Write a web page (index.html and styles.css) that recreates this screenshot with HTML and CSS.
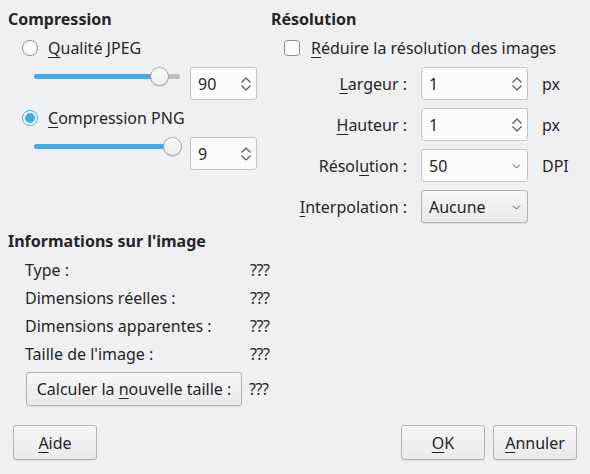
FILE: index.html
```html
<!DOCTYPE html>
<html lang="fr">
<head>
<meta charset="utf-8">
<title>Options d'image</title>
<link rel="stylesheet" href="styles.css">
</head>
<body>
<div class="dialog">
  <div class="top">
    <section class="col-left">
      <h2 class="heading">Compression</h2>
      <div class="radio-row">
        <span class="radio"></span>
        <span class="label"><u>Q</u>ualité JPEG</span>
      </div>
      <div class="slider-row">
        <div class="slider">
          <div class="track"></div>
          <div class="fill" style="width:126px"></div>
          <div class="handle" style="left:116px"></div>
        </div>
        <div class="spin">
          <span class="val">90</span>
          <svg class="arrows" width="12" height="18" viewBox="0 0 12 18"><path d="M1.5 7.5 L6 3 L10.5 7.5 M1.5 10.5 L6 15 L10.5 10.5" fill="none" stroke="#4d5054" stroke-width="1.1"/></svg>
        </div>
      </div>
      <div class="radio-row">
        <span class="radio checked"></span>
        <span class="label"><u>C</u>ompression PNG</span>
      </div>
      <div class="slider-row">
        <div class="slider">
          <div class="track"></div>
          <div class="fill" style="width:138px"></div>
          <div class="handle" style="left:129px"></div>
        </div>
        <div class="spin">
          <span class="val">9</span>
          <svg class="arrows" width="12" height="18" viewBox="0 0 12 18"><path d="M1.5 7.5 L6 3 L10.5 7.5 M1.5 10.5 L6 15 L10.5 10.5" fill="none" stroke="#4d5054" stroke-width="1.1"/></svg>
        </div>
      </div>
    </section>
    <section class="col-right">
      <h2 class="heading">Résolution</h2>
      <div class="check-row">
        <span class="checkbox"></span>
        <span class="label"><u>R</u>éduire la résolution des images</span>
      </div>
      <div class="form">
        <span class="flabel"><u>L</u>argeur :</span>
        <div class="spin wide">
          <span class="val">1</span>
          <svg class="arrows" width="12" height="18" viewBox="0 0 12 18"><path d="M1.5 7.5 L6 3 L10.5 7.5 M1.5 10.5 L6 15 L10.5 10.5" fill="none" stroke="#4d5054" stroke-width="1.1"/></svg>
        </div>
        <span class="unit">px</span>

        <span class="flabel"><u>H</u>auteur :</span>
        <div class="spin wide">
          <span class="val">1</span>
          <svg class="arrows" width="12" height="18" viewBox="0 0 12 18"><path d="M1.5 7.5 L6 3 L10.5 7.5 M1.5 10.5 L6 15 L10.5 10.5" fill="none" stroke="#4d5054" stroke-width="1.1"/></svg>
        </div>
        <span class="unit">px</span>

        <span class="flabel">Résol<u>u</u>tion :</span>
        <div class="combo edit">
          <span class="val">50</span>
          <svg class="chev" width="9" height="6" viewBox="0 0 9 6"><path d="M1 1.5 L4.5 5 L8 1.5" fill="none" stroke="#4d5054" stroke-width="1"/></svg>
        </div>
        <span class="unit">DPI</span>

        <span class="flabel"><u>I</u>nterpolation :</span>
        <div class="combo btn">
          <span class="val">Aucune</span>
          <svg class="chev" width="9" height="6" viewBox="0 0 9 6"><path d="M1 1.5 L4.5 5 L8 1.5" fill="none" stroke="#4d5054" stroke-width="1"/></svg>
        </div>
        <span class="unit"></span>
      </div>
    </section>
  </div>

  <section class="info">
    <h2 class="heading">Informations sur l'image</h2>
    <div class="info-grid">
      <span>Type :</span><span class="q">???</span>
      <span>Dimensions réelles :</span><span class="q">???</span>
      <span>Dimensions apparentes :</span><span class="q">???</span>
      <span>Taille de l'image :</span><span class="q">???</span>
    </div>
    <div class="calc-row">
      <button class="pbtn calc">Calculer la <u>n</u>ouvelle taille :</button>
      <span class="q">???</span>
    </div>
  </section>

  <div class="footer">
    <button class="pbtn dlg"><u>A</u>ide</button>
    <div class="spacer"></div>
    <button class="pbtn dlg"><u>O</u>K</button>
    <button class="pbtn dlg"><u>A</u>nnuler</button>
  </div>
</div>
</body>
</html>
```
FILE: styles.css
```css
html, body {
  margin: 0;
  padding: 0;
  background: #eff0f1;
}
body {
  font-family: "Noto Sans", "DejaVu Sans", sans-serif;
  font-size: 16px;
  color: #232629;
  line-height: 20px;
}
u {
  text-decoration: underline;
  text-decoration-thickness: 1px;
  text-underline-offset: 3px;
}
.dialog {
  width: 590px;
  height: 474px;
  box-sizing: border-box;
  padding: 9px 13px 14px 8px;
  display: flex;
  flex-direction: column;
}
.top {
  display: flex;
}
.heading {
  margin: 0;
  font-size: 16px;
  font-weight: bold;
  line-height: 20px;
}
.col-left {
  width: 263px;
}
.col-right {
  flex: 1;
}

/* radio */
.radio-row {
  display: flex;
  align-items: center;
  height: 20px;
  margin-top: 9px;
  padding-left: 14px;
}
.radio {
  width: 14px;
  height: 14px;
  border: 1px solid #8f9295;
  border-radius: 50%;
  background: #fcfcfc;
  margin-right: 10px;
  position: relative;
  flex: none;
}
.radio.checked {
  border-color: #3daee9;
  background: #fcfcfc;
}
.radio.checked::after {
  content: "";
  position: absolute;
  left: 2px;
  top: 2px;
  width: 10px;
  height: 10px;
  border-radius: 50%;
  background: #3daee9;
}

/* slider */
.slider-row {
  display: flex;
  align-items: flex-start;
  margin-top: 9px;
  padding-left: 26px;
}
.slider-row + .radio-row {
  margin-top: 8px;
}
.slider {
  position: relative;
  width: 148px;
  height: 19px;
  margin-right: 8px;
}
.track {
  position: absolute;
  left: 0;
  right: 2px;
  top: 7px;
  height: 5px;
  border-radius: 3px;
  background: #bcbec0;
}
.fill {
  position: absolute;
  left: 0;
  top: 7px;
  height: 5px;
  border-radius: 3px;
  background: #3daee9;
}
.handle {
  position: absolute;
  top: 0;
  width: 17px;
  height: 17px;
  border: 1px solid #a3a5a7;
  border-radius: 50%;
  background: linear-gradient(#fafbfb, #eceded);
  box-shadow: 0 1px 1px rgba(0,0,0,0.12);
}

/* spin box */
.spin, .combo {
  box-sizing: border-box;
  height: 33px;
  border: 1px solid #c1c3c5;
  border-radius: 3px;
  background: #fcfcfc;
  display: flex;
  align-items: center;
  padding-left: 7px;
  padding-right: 4px;
}
.spin {
  width: 67px;
}
.spin .val, .combo .val {
  flex: 1;
}
.arrows {
  display: block;
}
.spin.wide {
  width: 107px;
}

/* checkbox */
.check-row {
  display: flex;
  align-items: center;
  height: 20px;
  margin-top: 9px;
  padding-left: 13px;
}
.checkbox {
  box-sizing: border-box;
  width: 16px;
  height: 16px;
  border: 1px solid #8f9295;
  border-radius: 3px;
  background: #fcfcfc;
  margin-right: 11px;
  flex: none;
}

/* form grid */
.form {
  display: grid;
  grid-template-columns: 136px 107px auto;
  grid-auto-rows: 33px;
  column-gap: 14px;
  row-gap: 8px;
  margin-top: 9px;
  align-items: center;
}
.flabel {
  justify-self: end;
}
.combo {
  width: 107px;
  padding-right: 6px;
}
.chev {
  display: block;
}
.combo.btn {
  border-color: #b0b2b4;
  background: linear-gradient(#f5f6f6, #e9eaeb);
  box-shadow: 0 1px 1px rgba(0,0,0,0.08);
}

/* info */
.info {
  margin-top: 8px;
}
.info-grid {
  display: grid;
  grid-template-columns: 225px auto;
  grid-auto-rows: 28px;
  align-items: center;
  padding-left: 17px;
  margin-top: 5px;
}
.q {
  letter-spacing: -0.5px;
}
.calc-row {
  display: flex;
  align-items: center;
  padding-left: 18px;
  margin-top: 4px;
}
.pbtn {
  font-family: inherit;
  font-size: 16px;
  color: #232629;
  box-sizing: border-box;
  border: 1px solid #b0b2b4;
  border-radius: 3px;
  background: linear-gradient(#f5f6f6, #e9eaeb);
  box-shadow: 0 1px 1px rgba(0,0,0,0.08);
  padding: 0;
  line-height: 20px;
}
.calc {
  width: 216px;
  height: 34px;
  margin-right: 7px;
}
.footer {
  margin-top: auto;
  display: flex;
  align-items: center;
  padding-left: 5px;
  gap: 8px;
}
.spacer {
  flex: 1;
}
.dlg {
  width: 84px;
  height: 35px;
}
```
